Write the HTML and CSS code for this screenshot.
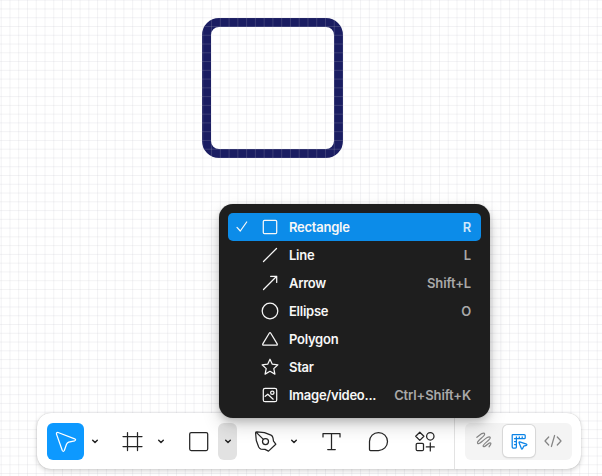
FILE: index.html
```html
<!DOCTYPE html>
<html lang="en">
<head>
<meta charset="utf-8">
<title>Shape tools</title>
<link rel="stylesheet" href="styles.css">
</head>
<body>
<main class="canvas">
  <div class="shape"></div>
  <div class="grid"></div>

  <nav class="toolbar">
    <div class="group">
      <button class="tool selected"><svg viewBox="-18.5 -18.5 37 37"><path d="M-7.4-9 9.2-2.7q1.8 1 0 2L3.2.6Q1.7 1.2 1 2.7L-1.2 9q-1 1.7-2 0L-9-7.4Q-9.3-9.4-7.4-9Z"/></svg></button>
      <button class="caret"><svg viewBox="-5 -5 10 10"><path d="M-2.3-.7 0 1.5 2.3-.7"/></svg></button>
    </div>
    <div class="group">
      <button class="tool"><svg viewBox="-18.5 -18.5 37 37"><path d="M-5-9V9M5-9V9M-9.5-5h19M-9.5 5h19"/></svg></button>
      <button class="caret"><svg viewBox="-5 -5 10 10"><path d="M-2.3-.7 0 1.5 2.3-.7"/></svg></button>
    </div>
    <div class="group">
      <button class="tool"><svg viewBox="-18.5 -18.5 37 37"><rect x="-8.8" y="-9" width="18" height="18" rx="1.5"/></svg></button>
      <button class="caret open"><svg viewBox="-5 -5 10 10"><path d="M-2.3-.7 0 1.5 2.3-.7"/></svg></button>
    </div>
    <div class="group">
      <button class="tool"><svg viewBox="-18.5 -18.5 37 37"><path d="M-8.5-9.7-1-8.9 5.5-6.4Q7.2-5.6 7.5-3.5L8-.4 10.3 2.7 3 9.6-.5 7.9-4.5 7.6Q-6 7.2-6.8 5.5L-9.2-1-9.9-8.5Q-9.8-9.8-8.5-9.7ZM-9.5-9.4-2.1-2.1"/><circle r="3"/></svg></button>
      <button class="caret"><svg viewBox="-5 -5 10 10"><path d="M-2.3-.7 0 1.5 2.3-.7"/></svg></button>
    </div>
    <button class="tool"><svg viewBox="-18.5 -18.5 37 37"><path d="M-8.5-4.6V-8h17v3.4M0-8V8M-3.8 8h7.6"/></svg></button>
    <button class="tool"><svg viewBox="-18.5 -18.5 37 37"><path d="M0-9A9 9 0 0 1 0 9H-8Q-9 9-9 8V0A9 9 0 0 1 0-9Z"/></svg></button>
    <button class="tool"><svg viewBox="-18.5 -18.5 37 37"><path d="M-4.7-9.3-.6-5.2-4.7-1.1-8.8-5.2ZM5.8 1.4v8M1.8 5.4h8"/><circle cx="5.8" cy="-5.2" r="3.7"/><rect x="-8.3" y="1.8" width="7.3" height="7.3" rx="1.2"/></svg></button>
    <div class="divider"></div>
    <div class="modes">
      <button class="mode"><svg viewBox="-17 -17 34 34"><path d="M-7.1-3.7-2.2-7.4Q.8-8.9.6-6.5C.2-4.5-6.1-.7-6.5 1.5-6.6 4.1-3.8 2-1.4 0 1.3-2.2 5-5.4 6.2-3.6 7-1.6-.6 2.6-.9 4.9-1 7 2.2 4.6 4 3 5.6 1.6 7.1 1.4 6.8 3 6.6 4.2 5.5 4.6 5.1 5.8"/></svg></button>
      <button class="mode active"><svg viewBox="-17 -17 34 34"><path d="M-6.3-6.5H5.2Q6.2-6.5 6.2-5.5v2.2q0 1-1 1H-2.6V6q0 1-1 1H-5.8q-1 0-1-1V-5.8Q-6.8-6.5-6.3-6.5ZM-2.6-2.3V-4.2M.3-2.3V-4.2M3.2-2.3V-4.2M-2.6-2.3H-4.5M-2.6.6H-4.5M-2.6 3.5H-4.5M.7.8 7.5 3.2Q8.3 3.8 7.5 4.3L4.7 5.2 3.5 7.7Q2.9 8.5 2.4 7.6L0 1.5Q0 .7.7.8Z"/></svg></button>
      <button class="mode"><svg viewBox="-17 -17 34 34"><path d="M-4.3-4-8 0l3.7 4M4.3-4 8 0 4.3 4M1.6-5.5-1.6 5.5"/></svg></button>
    </div>
  </nav>

  <div class="menu">
    <div class="item current">
      <svg class="check" viewBox="-8 -8 16 16"><path d="M-5 .4-1.7 4 4.7-5"/></svg>
      <svg class="icon" viewBox="-10 -10 20 20"><rect x="-6.7" y="-6.7" width="13.4" height="13.4" rx="1.2"/></svg>
      <span class="label">Rectangle</span><span class="key">R</span>
    </div>
    <div class="item">
      <svg class="icon" viewBox="-10 -10 20 20"><path d="M-6.5 6.5 6.5-6.5"/></svg>
      <span class="label">Line</span><span class="key">L</span>
    </div>
    <div class="item">
      <svg class="icon" viewBox="-10 -10 20 20"><path d="M-6.5 6.5 6.7-6.7M.6-6.7H6.7V-.6"/></svg>
      <span class="label">Arrow</span><span class="key">Shift+L</span>
    </div>
    <div class="item">
      <svg class="icon" viewBox="-10 -10 20 20"><circle r="7.8"/></svg>
      <span class="label">Ellipse</span><span class="key">O</span>
    </div>
    <div class="item">
      <svg class="icon" viewBox="-10 -10 20 20"><path d="M-.6-6Q0-7 .6-6L7.2 4.9Q7.7 6.1 6.4 6.1H-6.4Q-7.7 6.1-7.2 4.9Z"/></svg>
      <span class="label">Polygon</span>
    </div>
    <div class="item">
      <svg class="icon" viewBox="-10 -10 20 20"><path d="M0-7.8 2.3-2.8 7.9-2.2 3.8 1.6 4.9 7.1 0 4.3-4.9 7.1-3.8 1.6-7.9-2.2-2.3-2.8Z"/></svg>
      <span class="label">Star</span>
    </div>
    <div class="item">
      <svg class="icon" viewBox="-10 -10 20 20"><rect x="-6.7" y="-6.7" width="13.4" height="13.4" rx="1.8"/><circle cx="2.3" cy="-2.3" r="1.7"/><path d="M-4.8 1.3-2.2-.8 3.2 4.2"/></svg>
      <span class="label">Image/video...</span><span class="key">Ctrl+Shift+K</span>
    </div>
  </div>
</main>
</body>
</html>
```
FILE: styles.css
```css
* { box-sizing: border-box; }

body {
  margin: 0;
  font-family: Inter, "Liberation Sans", sans-serif;
}

button {
  border: 0;
  padding: 0;
  background: none;
  color: inherit;
}

svg {
  display: block;
  fill: none;
  stroke: currentColor;
  stroke-width: 1.25;
  stroke-linecap: round;
  stroke-linejoin: round;
}

.canvas {
  position: relative;
  display: flex;
  flex-direction: column;
  justify-content: flex-end;
  width: 602px;
  height: 476px;
  padding: 0 21px 7px 37px;
  overflow: hidden;
  background: #fff;
}

.grid {
  position: absolute;
  inset: 0;
  background-image:
    linear-gradient(90deg, rgba(190, 190, 200, .2) 1px, transparent 1px),
    linear-gradient(rgba(190, 190, 200, .2) 1px, transparent 1px);
  background-size: 8.78px 8.78px;
  background-position: .7px -.3px;
}

.shape {
  position: absolute;
  left: 202.4px;
  top: 17.5px;
  width: 140.5px;
  height: 140.5px;
  border: 9px solid #1a1d62;
  border-radius: 17px;
}

.toolbar {
  position: relative;
  display: flex;
  align-items: center;
  gap: 9.5px;
  height: 56px;
  padding: 0 9px 0 10px;
  border-radius: 14px;
  background: #fff;
  color: #252525;
  box-shadow: 0 0 1px rgba(0, 0, 0, .25), 0 2px 5px rgba(0, 0, 0, .17);
}

.group {
  display: flex;
  gap: 1px;
}

.tool {
  width: 37px;
  height: 37px;
  border-radius: 6px;
}

.selected {
  background: #0d99ff;
  color: #fff;
}

.caret {
  display: flex;
  align-items: center;
  justify-content: center;
  width: 19px;
  height: 37px;
  border-radius: 6px;
}

.caret svg {
  width: 10px;
  height: 10px;
  stroke-width: 1.5;
}

.open { background: #e2e2e2; }

.divider {
  width: 1px;
  height: 56px;
  margin-left: 1px;
  background: #e3e3e3;
}

.modes {
  display: flex;
  align-items: center;
  justify-content: space-between;
  width: 107px;
  height: 37px;
  margin-left: auto;
  padding: 0 2px;
  border-radius: 6px;
  background: #f4f4f4;
  color: #858585;
}

.mode {
  width: 34px;
  height: 34px;
  border-radius: 5px;
}

.active {
  width: 32px;
  height: 32px;
  background: #fff;
  color: #0b83e6;
  box-shadow: 0 0 0 1px #d8d8d8, 0 1px 2px rgba(0, 0, 0, .15);
}

.active svg {
  width: 34px;
  height: 34px;
  margin: -1px;
}

.menu {
  position: absolute;
  left: 219px;
  top: 204px;
  width: 271px;
  height: 214px;
  padding: 9px;
  border-radius: 14px;
  background: #1e1e1e;
  color: #f7f7f7;
  font-size: 13px;
  font-weight: 600;
  letter-spacing: -.25px;
  box-shadow: 0 0 1px rgba(0, 0, 0, .3), 0 4px 7px rgba(0, 0, 0, .15), 0 8px 18px rgba(0, 0, 0, .16);
}

.item {
  display: grid;
  grid-template-columns: 16px 20px 1fr auto;
  align-items: center;
  height: 28px;
  padding: 0 10px 0 6px;
  border-radius: 5px;
}

.current { background: #0c8ce9; }

.check {
  grid-column: 1;
  width: 16px;
  height: 16px;
}

.icon {
  grid-column: 2;
  width: 20px;
  height: 20px;
  margin-left: 10px;
}

.label {
  grid-column: 3;
  margin-left: 19px;
}

.key {
  grid-column: 4;
  color: #a9a9a9;
  letter-spacing: -.12px;
}

.current .key { color: #d0e8fb; }
```
